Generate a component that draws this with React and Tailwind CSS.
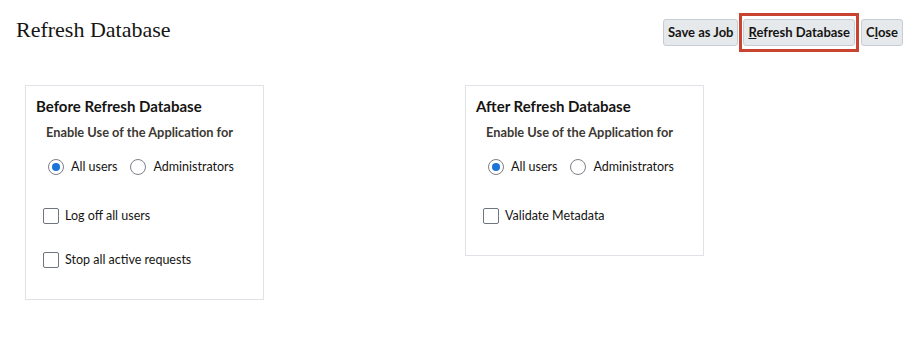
import React, { useState } from 'react';

const FONT = { fontFamily: 'Lato, "Noto Sans", sans-serif' };

const Radio = ({ checked, label, onChange }) => (
  <label className="flex items-center cursor-pointer" onClick={onChange}>
    <span className="w-4 h-4 rounded-full border border-[#7b8088] bg-white flex items-center justify-center">
      {checked && <span className="w-2 h-2 rounded-full bg-[#1a73d9]"></span>}
    </span>
    <span className="ml-[7px] text-[12.5px] leading-4 text-[#161513]">{label}</span>
  </label>
);

const Checkbox = ({ checked, label, onChange }) => (
  <label className="flex items-center cursor-pointer" onClick={onChange}>
    <span className="w-4 h-4 rounded-[2px] border border-[#6f7680] bg-white flex items-center justify-center">
      {checked && (
        <svg width="10" height="10" viewBox="0 0 10 10">
          <path d="M1.5 5.2l2.3 2.3L8.5 2.5" stroke="#1a73d9" strokeWidth="1.6" fill="none" />
        </svg>
      )}
    </span>
    <span className="ml-[6px] text-[12.5px] leading-4 text-[#161513]">{label}</span>
  </label>
);

const Panel = ({ title, children, access, setAccess }) => (
  <div className="w-[239px] border border-[#dfe3e7] bg-white pt-[10px] pb-[31px]">
    <div className="pl-[10px] text-[15px] leading-5 font-bold text-[#161513]">{title}</div>
    <div className="pl-[20px] mt-[7px] text-[12.8px] leading-[18px] font-bold text-[#3c3833]">
      Enable Use of the Application for
    </div>
    <div className="flex items-center pl-[22px] mt-[18px]">
      <Radio checked={access === 'all'} label="All users" onChange={() => setAccess('all')} />
      <div className="ml-[13px]">
        <Radio checked={access === 'admin'} label="Administrators" onChange={() => setAccess('admin')} />
      </div>
    </div>
    <div className="pl-[17px] mt-[33px] flex flex-col gap-[28px]">{children}</div>
  </div>
);

export default function App() {
  const [beforeAccess, setBeforeAccess] = useState('all');
  const [afterAccess, setAfterAccess] = useState('all');
  const [logOff, setLogOff] = useState(false);
  const [stopReq, setStopReq] = useState(false);
  const [validate, setValidate] = useState(false);

  return (
    <div className="w-[918px] h-[344px] bg-white overflow-hidden" style={FONT}>
      {/* Header */}
      <div className="flex items-start justify-between pl-4 pr-[15px]">
        <h1
          className="pt-4 text-[22px] leading-7 text-[#161513]"
          style={{ fontFamily: '"Liberation Serif", serif' }}
        >
          Refresh Database
        </h1>
        <div className="flex items-center mt-[19px]">
          <button className="h-[27px] px-[4px] rounded-[3px] border border-[#c6cdd4] bg-[#e6e9ec] text-[13px] font-bold text-[#161513]">
            Save as Job
          </button>
          <div className="relative ml-[5px]">
            <button className="h-[27px] px-[4px] rounded-[3px] border border-[#c6cdd4] bg-[#e6e9ec] text-[13px] font-bold text-[#161513]">
              <span className="underline">R</span>efresh Database
            </button>
            <span className="absolute -left-[4px] -right-[4px] -top-[6px] -bottom-[6px] border-[3px] border-[#c9442f] pointer-events-none"></span>
          </div>
          <button className="ml-[6px] h-[27px] px-[4px] rounded-[3px] border border-[#c6cdd4] bg-[#e6e9ec] text-[13px] font-bold text-[#161513]">
            C<span className="underline">l</span>ose
          </button>
        </div>
      </div>

      {/* Panels */}
      <div className="flex items-start gap-[201px] pl-[25px] mt-[39px]">
        <Panel title="Before Refresh Database" access={beforeAccess} setAccess={setBeforeAccess}>
          <Checkbox checked={logOff} label="Log off all users" onChange={() => setLogOff(v => !v)} />
          <Checkbox checked={stopReq} label="Stop all active requests" onChange={() => setStopReq(v => !v)} />
        </Panel>
        <Panel title="After Refresh Database" access={afterAccess} setAccess={setAfterAccess}>
          <Checkbox checked={validate} label="Validate Metadata" onChange={() => setValidate(v => !v)} />
        </Panel>
      </div>
    </div>
  );
}
